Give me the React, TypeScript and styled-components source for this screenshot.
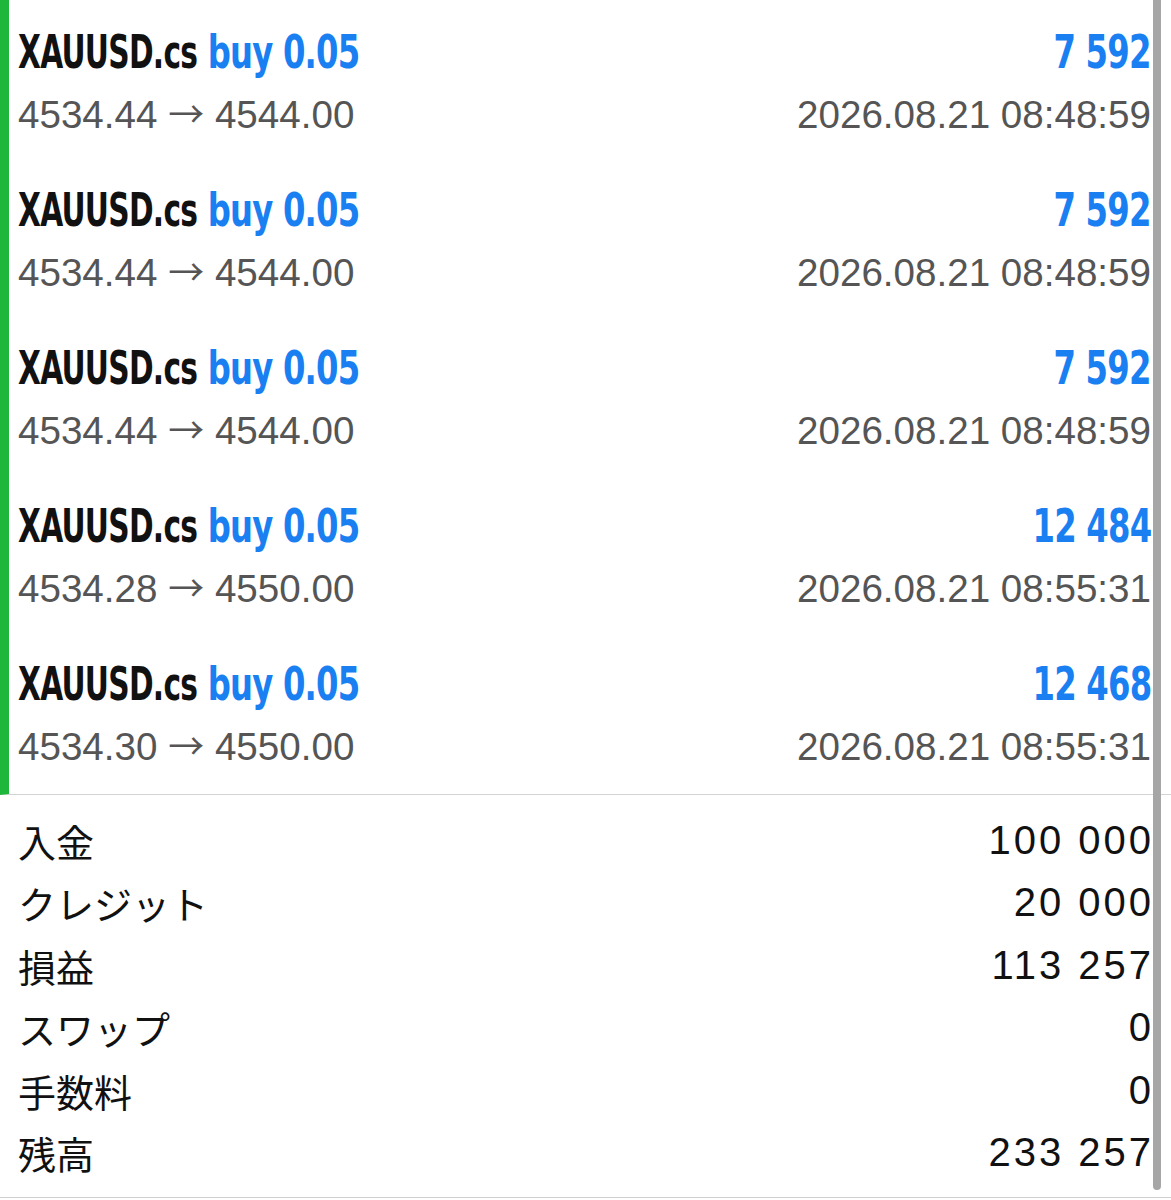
import styled, { createGlobalStyle } from 'styled-components';

const GlobalStyle = createGlobalStyle`
  html, body {
    margin: 0;
    padding: 0;
    background: #ffffff;
  }
`;

const Screen = styled.div`
  position: relative;
  width: 1171px;
  height: 1200px;
  overflow: hidden;
  background: #ffffff;
  font-family: 'Liberation Sans', Arial, sans-serif;
`;

const DealList = styled.div`
  border-left: 9px solid #1fb73b;
  padding-bottom: 4px;
  border-bottom: 1px solid #d4d4d4;
`;

const DealRow = styled.div`
  height: 158px;
  box-sizing: border-box;
  padding: 22px 20px 19px 9px;
  display: grid;
  grid-template-rows: 60px 48px;
  row-gap: 9px;
`;

const Line = styled.div`
  display: flex;
  justify-content: space-between;
  align-items: baseline;
  white-space: nowrap;
`;

const Title = styled.span<{ $align?: 'left' | 'right' }>`
  display: inline-block;
  font-family: 'DejaVu Sans Condensed', 'DejaVu Sans', sans-serif;
  font-stretch: condensed;
  font-weight: 700;
  font-size: 46px;
  line-height: 60px;
  letter-spacing: -1px;
  transform: scaleX(0.78);
  transform-origin: ${(p) => (p.$align === 'right' ? 'right' : 'left')} center;
  color: #111111;
`;

const Symbol = styled.span`
  display: inline-block;
  transform: scaleX(0.92);
  transform-origin: left center;
  margin-right: -20px;
`;

const Blue = styled.span`
  color: #1a80f2;
`;

const Sub = styled.span`
  font-size: 38.6px;
  line-height: 48px;
  color: #555555;
`;

const Arrow = styled.span`
  font-family: 'Noto Sans CJK JP', 'DejaVu Sans', sans-serif;
  font-size: 36px;
  line-height: 0;
`;

const Summary = styled.div`
  padding: 14px 20px 13px 18px;
  border-bottom: 1px solid #cfcfcf;
`;

const SummaryRow = styled.div`
  height: 62.5px;
  display: flex;
  justify-content: space-between;
  align-items: center;
  white-space: nowrap;
`;

const SummaryLabel = styled.span`
  font-family: 'Noto Sans CJK JP', 'Liberation Sans', sans-serif;
  font-size: 38px;
  color: #111111;
`;

const SummaryValue = styled.span`
  font-size: 40px;
  letter-spacing: 3px;
  margin-right: -3px;
  color: #111111;
`;

const ScrollThumb = styled.div`
  position: absolute;
  top: -10px;
  left: 1153px;
  width: 8px;
  height: 1200px;
  border-radius: 4px;
  background: #a6a6a6;
`;

const deals = [
  { open: '4534.44', close: '4544.00', profit: '7 592', time: '2026.08.21 08:48:59' },
  { open: '4534.44', close: '4544.00', profit: '7 592', time: '2026.08.21 08:48:59' },
  { open: '4534.44', close: '4544.00', profit: '7 592', time: '2026.08.21 08:48:59' },
  { open: '4534.28', close: '4550.00', profit: '12 484', time: '2026.08.21 08:55:31' },
  { open: '4534.30', close: '4550.00', profit: '12 468', time: '2026.08.21 08:55:31' },
];

const totals = [
  { label: '入金', value: '100 000' },
  { label: 'クレジット', value: '20 000' },
  { label: '損益', value: '113 257' },
  { label: 'スワップ', value: '0' },
  { label: '手数料', value: '0' },
  { label: '残高', value: '233 257' },
];

export default function App() {
  return (
    <>
      <GlobalStyle />
      <Screen>
        <DealList>
          {deals.map((d, i) => (
            <DealRow key={i}>
              <Line>
                <Title>
                  <Symbol>XAUUSD.cs</Symbol> <Blue>buy 0.05</Blue>
                </Title>
                <Title $align="right">
                  <Blue>{d.profit}</Blue>
                </Title>
              </Line>
              <Line>
                <Sub>
                  {d.open} <Arrow>→</Arrow> {d.close}
                </Sub>
                <Sub>{d.time}</Sub>
              </Line>
            </DealRow>
          ))}
        </DealList>
        <Summary>
          {totals.map((t) => (
            <SummaryRow key={t.label}>
              <SummaryLabel>{t.label}</SummaryLabel>
              <SummaryValue>{t.value}</SummaryValue>
            </SummaryRow>
          ))}
        </Summary>
        <ScrollThumb />
      </Screen>
    </>
  );
}
